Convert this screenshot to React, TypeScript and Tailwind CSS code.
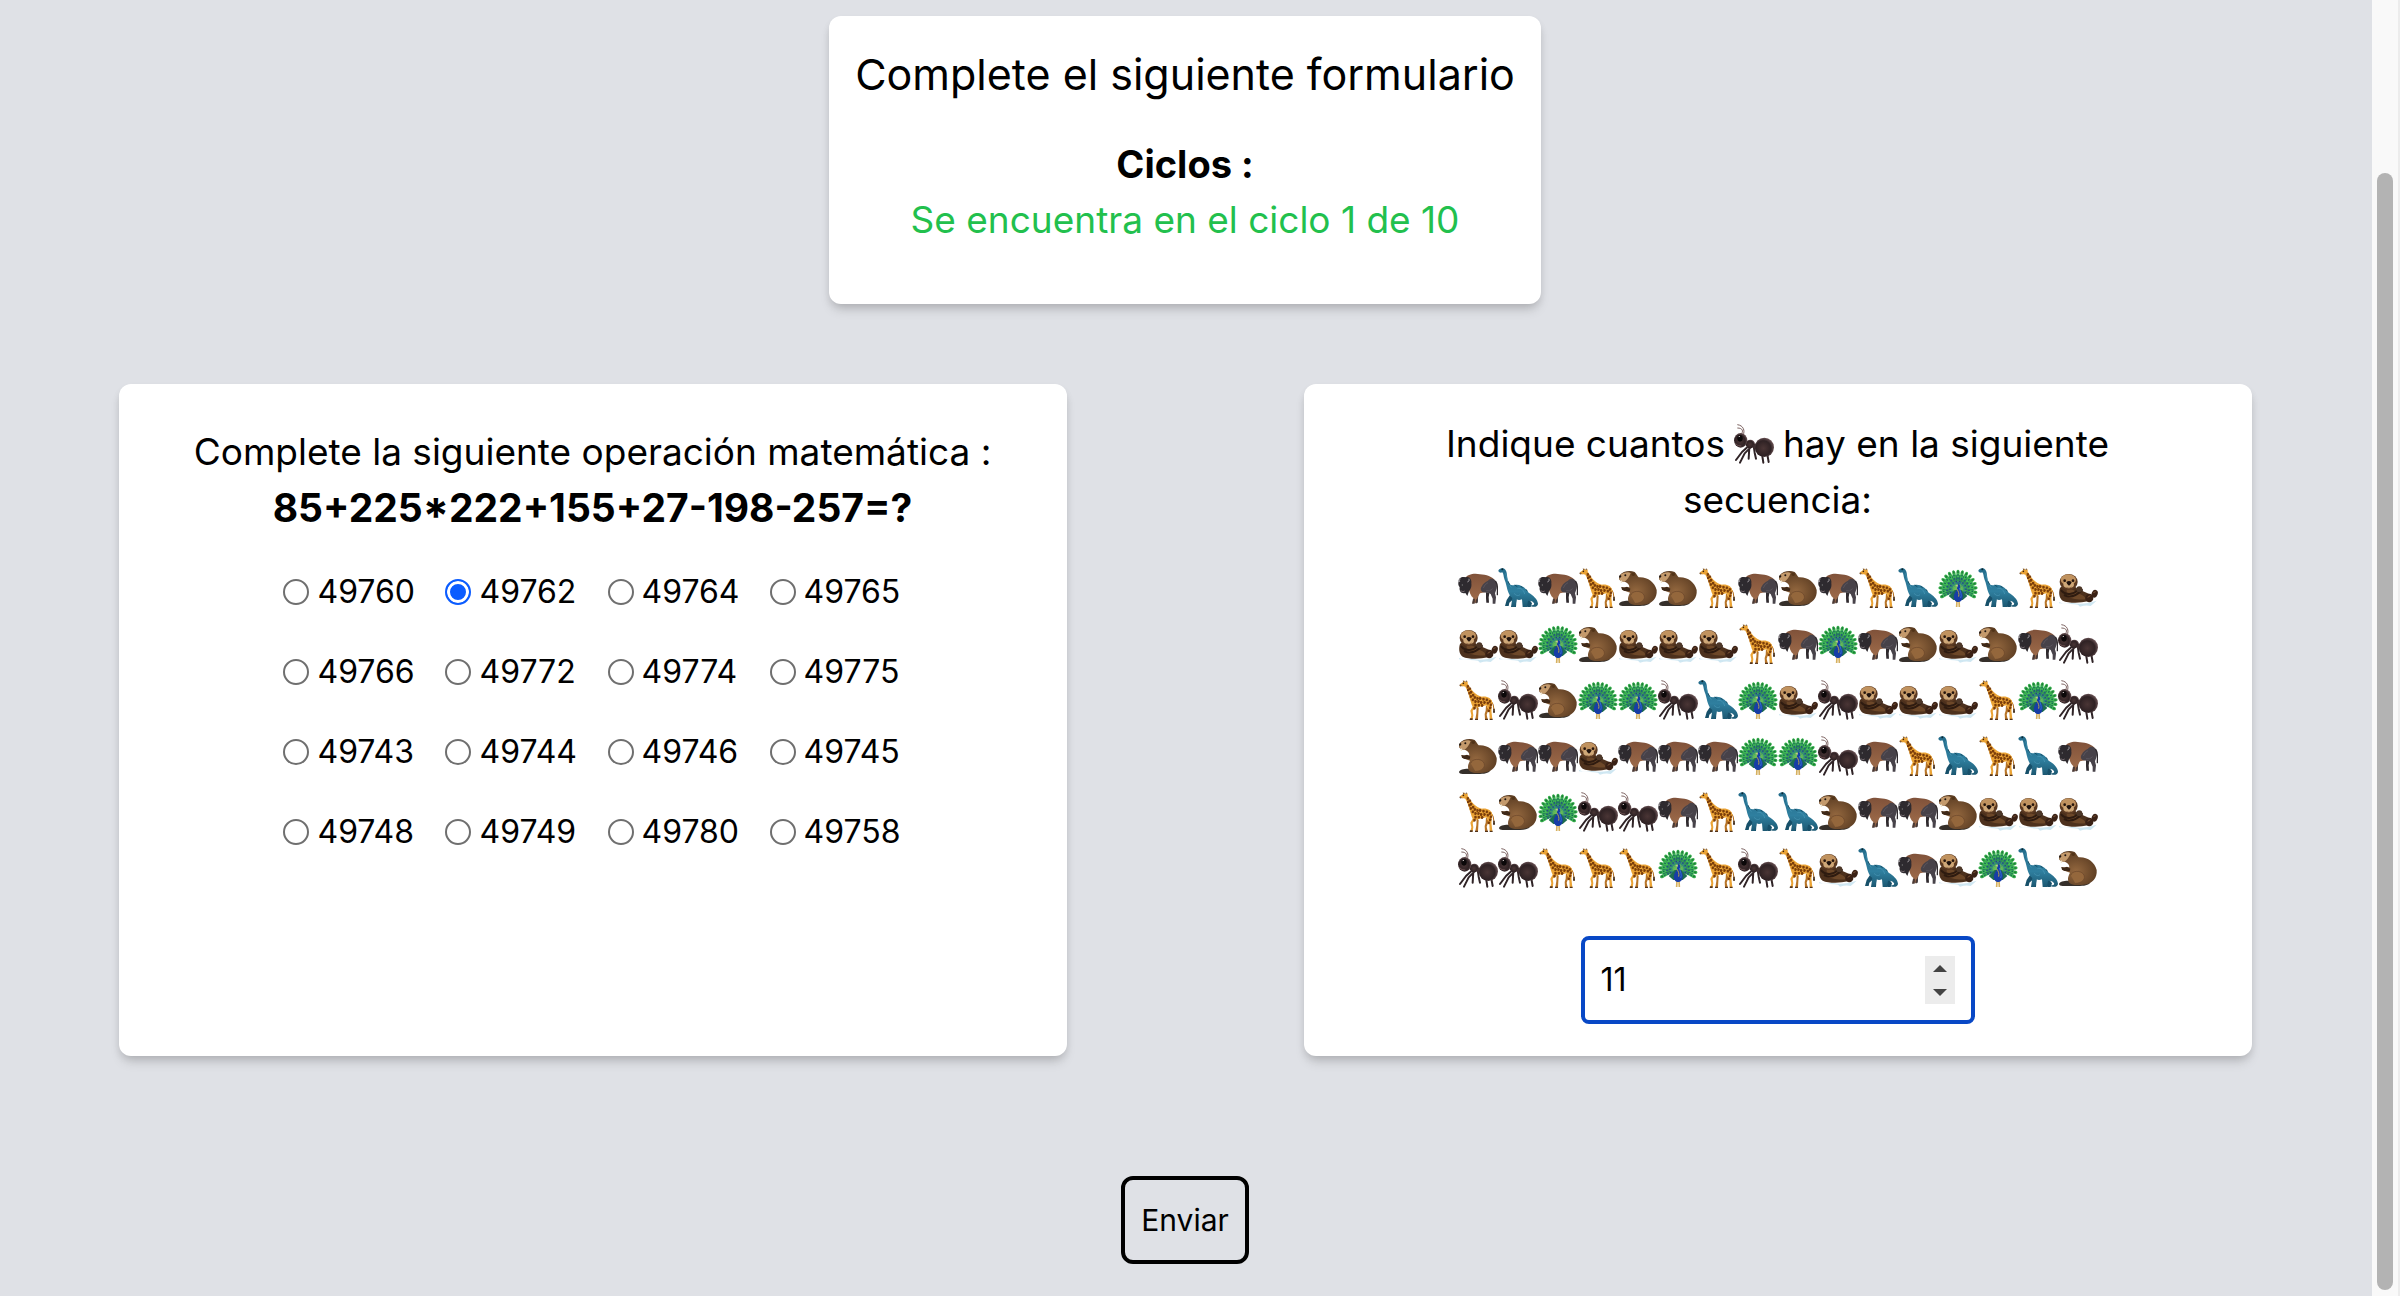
import { useState } from "react";
import type { ReactNode } from "react";

type Animal = "B" | "D" | "G" | "C" | "P" | "O" | "A";

const names: Record<Animal, string> = {
  B: "bisonte",
  D: "dinosaurio",
  G: "jirafa",
  C: "castor",
  P: "pavo real",
  O: "nutria",
  A: "hormiga",
};

const sequence = [
  "BDBGCCGBCBGDPDGO",
  "OOPCOOOGBPBCOCBA",
  "GACPPADPOAOOOGPA",
  "CBBOBBBPPABGDGDB",
  "GCPAABGDDCBBCOOO",
  "AAGGGPGAGODBOPDC",
];

const answers = [
  49760, 49762, 49764, 49765, 49766, 49772, 49774, 49775, 49743, 49744, 49746, 49745, 49748, 49749,
  49780, 49758,
];

function Gradients() {
  return (
    <svg className="absolute size-0" aria-hidden="true">
      <defs>
        <radialGradient id="antBody" cx="45%" cy="55%" r="60%">
          <stop offset="0" stopColor="#4a3535" />
          <stop offset="0.65" stopColor="#2f2224" />
          <stop offset="1" stopColor="#7a6062" />
        </radialGradient>
        <radialGradient id="fur" cx="45%" cy="60%" r="60%">
          <stop offset="0" stopColor="#94683f" />
          <stop offset="1" stopColor="#5b3c22" />
        </radialGradient>
        <linearGradient id="dino" x1="0" y1="0" x2="0" y2="1">
          <stop offset="0" stopColor="#236b8a" />
          <stop offset="0.6" stopColor="#2f7f9f" />
          <stop offset="1" stopColor="#1c5872" />
        </linearGradient>
        <linearGradient id="hump" x1="0" y1="0" x2="0" y2="1">
          <stop offset="0" stopColor="#80523a" />
          <stop offset="1" stopColor="#a06d4b" />
        </linearGradient>
      </defs>
    </svg>
  );
}

const bison = (
  <>
    <path d="M84 72L94 76L92 88L93 104H85L84 90ZM52 78L61 80L59 104H53Z" fill="#2f2a2e" />
    <path d="M20 32C28 19 48 15 66 19C84 20 104 26 112 38C112 50 104 62 96 70L66 76C62 82 60 86 58 92L56 104H44L46 90C38 84 34 72 32 60Z" fill="url(#hump)" />
    <path d="M90 38C100 26 112 34 116 46C119 58 114 68 111 76L114 88L112 107H104L104 92L98 78C90 73 84 75 76 73C68 70 66 62 72 54C76 46 82 42 90 38Z" fill="#474249" />
    <path d="M45 92H51L50 107H42ZM54 94H59L57 106H52Z" fill="#4a3a36" />
    <path d="M113 40C121 52 118 66 118 80" stroke="#2e292d" strokeWidth="4" fill="none" strokeLinecap="round" />
    <path d="M2 40C1 30 12 25 22 28C34 23 42 34 40 46C42 58 36 66 33 70L28 84L22 75C10 78 3 70 5 58C0 52 0 46 2 40Z" fill="#2e2a2f" />
    <path d="M5 42Q2 36 7 32M28 42Q36 40 33 32" stroke="#9b9599" strokeWidth="3" fill="none" />
    <circle cx="13" cy="51" r="2" fill="#777" />
    <path d="M8 68Q15 74 20 69" stroke="#756b70" strokeWidth="3" fill="none" />
    <path d="M76 60Q80 48 90 44M84 68Q95 72 104 62" stroke="#625c65" strokeWidth="2" fill="none" />
  </>
);

const dinosaur = (
  <>
    <path d="M56 88L54 117H44L46 94L34 104L32 114H21L26 96L38 78ZM90 90L102 106L98 117H88L82 100Z" fill="#17506a" />
    <path d="M1 8C3 0 16 -2 22 5C28 12 26 24 30 38C33 50 40 54 50 51C66 48 82 58 92 74C106 82 119 94 120 107C120 117 106 120 94 112C104 114 112 110 107 104C102 98 95 98 90 98L87 117H74L72 94Q62 98 56 94L52 117H39L43 90C26 76 28 54 20 36C16 26 17 16 13 13C8 15 3 14 1 8Z" fill="url(#dino)" />
    <circle cx="13" cy="4" r="3" fill="#0c2731" />
    <path d="M23 16C27 34 31 48 40 59M58 62C70 58 78 68 80 78M48 76C56 84 60 84 66 80" stroke="#4b9ab8" strokeWidth="2" fill="none" />
    <path d="M30 40L35 50M50 51L58 56M68 54L74 60M84 64L88 70" stroke="#164e66" strokeWidth="3" />
  </>
);

const giraffeSpots = [
  [29, 19], [35, 26], [30, 29], [39, 36], [34, 39], [45, 45], [38, 49], [50, 52], [44, 59], [58, 55],
  [52, 64], [66, 55], [61, 64], [69, 67], [76, 57], [79, 67], [86, 59], [89, 69], [95, 64], [98, 74],
  [52, 75], [62, 75], [72, 76], [96, 83], [49, 84], [92, 92],
];

const giraffe = (
  <>
    <path d="M98 60Q108 72 108 90" stroke="#b06a18" strokeWidth="3" fill="none" />
    <path d="M106 86h4l1 12h-6z" fill="#3b2412" />
    <path d="M56 78L62 84L60 118H52L55 100ZM84 74L92 88L86 104L89 118H81L80 102L83 92Z" fill="#b87527" />
    <path d="M6 13L16 6L18 1L22 6L29 4L29 11C34 18 38 27 47 36C54 43 62 48 72 50C88 48 101 55 103 68C102 80 99 88 101 100L103 117H95L94 98L86 76L64 80L53 84L44 92L46 106L44 118H37L40 106L37 92L44 80C36 62 32 36 22 20C16 20 8 20 6 13Z" fill="#eba436" />
    {giraffeSpots.map(([x, y]) => (
      <path key={`${x}-${y}`} d={`M${x - 3} ${y - 3}l5 -1l3 4l-3 5l-5 -1z`} fill="#7b3e0b" />
    ))}
    <path d="M36 115h8v5h-9zM51 116h9v4h-9zM81 116h9v4h-9zM95 116h9v4h-9z" fill="#53331a" />
    <circle cx="16" cy="10" r="2.5" fill="#2c1708" />
    <path d="M16 2l2 4M25 2l-1 4" stroke="#53331a" strokeWidth="3" />
    <path d="M5 14l5 5" stroke="#7a5330" strokeWidth="4" />
  </>
);

const beaver = (
  <>
    <path d="M3 108C6 98 26 97 44 99L98 100C96 110 84 114 66 114H14C8 114 3 112 3 108Z" fill="#352f2a" />
    <path d="M5 22C14 10 34 6 50 12C56 18 58 24 62 28C88 26 110 42 116 66C118 90 104 108 76 110C58 112 40 112 34 104C26 94 32 82 36 74L14 66L10 58L34 58C34 50 30 46 22 42C12 40 4 38 3 32Z" fill="url(#fur)" />
    <path d="M6 22C14 14 32 10 38 16C34 26 28 36 20 41C12 40 5 38 4 32Z" fill="#c49a6c" />
    <path d="M38 82C42 68 66 66 76 78C86 92 72 106 52 106" fill="#94673c" stroke="#68462a" strokeWidth="2" />
    <path d="M3 24l6-3 1 5-5 5z" fill="#1c1411" />
    <circle cx="22" cy="22" r="3" fill="#1c1411" />
    <ellipse cx="46" cy="19" rx="5" ry="5" fill="#513419" />
    <path d="M8 37l4 1v7l-4-1z" fill="#f2e6cc" />
    <path d="M10 57l8 2 9-3 10 6-2 8-15-1-8-4z" fill="#3f2918" />
  </>
);

const otter = (
  <>
    <path d="M3 102Q20 110 44 104Q72 112 116 98L98 114Q84 110 66 116L60 110Q40 108 3 106Z" fill="#cfe7f2" />
    <path d="M6 60C14 50 44 48 58 62L94 78L90 100C66 106 30 106 14 98C2 90 2 72 6 60Z" fill="#4d311d" />
    <path d="M26 64C36 60 52 68 60 76C76 82 84 88 82 94C60 96 36 92 26 84Z" fill="#6d4829" />
    <ellipse cx="32" cy="42" rx="27" ry="24" fill="#5c3a22" />
    <ellipse cx="31" cy="35" rx="23" ry="16" fill="#c0925f" />
    <ellipse cx="32" cy="50" rx="16" ry="11" fill="#cfa878" />
    <circle cx="20" cy="38" r="4" fill="#25150d" />
    <circle cx="45" cy="38" r="4" fill="#25150d" />
    <path d="M25 42Q33 36 41 42Q39 51 33 53Q27 51 25 42Z" fill="#21130e" />
    <path d="M25 58Q33 64 41 57" stroke="#7b5437" strokeWidth="2" fill="none" />
    <path d="M10 68C24 84 46 80 62 64M20 82C40 92 56 82 72 66" stroke="#2e1b10" strokeWidth="6" fill="none" strokeLinecap="round" />
    <circle cx="64" cy="64" r="9" fill="#4d3728" />
    <ellipse cx="94" cy="90" rx="12" ry="13" fill="#3a2115" />
    <ellipse cx="110" cy="77" rx="9" ry="12" transform="rotate(20 110 77)" fill="#3a2115" />
    <path d="M89 88l8-5M106 74l7-3" stroke="#7b5437" strokeWidth="3" />
  </>
);

const plumes = [
  { r: 50, n: 17, long: 9, wide: 5, fill: "#36b04c", eye: "#1d7a3a" },
  { r: 41, n: 15, long: 8, wide: 4.5, fill: "#44bd58", eye: "#176a55" },
  { r: 31, n: 13, long: 7, wide: 4, fill: "#2d9455", eye: "#234c8c" },
  { r: 22, n: 10, long: 6, wide: 4, fill: "#2c8a7c", eye: "#263a7c" },
];

const peacock = (
  <>
    <path d="M60 66L16 84C10 70 12 48 20 38C30 24 44 20 60 20C76 20 90 26 100 38C108 50 110 70 104 84Z" fill="#1f6f58" />
    {plumes.map(({ r, n, long, wide, fill, eye }) =>
      Array.from({ length: n }, (_, i) => {
        const degrees = -114 + (228 * i) / (n - 1);
        return (
          <g key={`${r}-${i}`} transform={`rotate(${degrees} 60 64)`}>
            <path d={`M60 60V${64 - r}`} stroke="#6cc45a" strokeWidth="1.5" />
            <ellipse cx="60" cy={64 - r} rx={wide} ry={long} fill={fill} />
            <ellipse cx="60" cy={62 - r} rx={wide * 0.5} ry={long * 0.4} fill={eye} />
          </g>
        );
      })
    )}
    <path d="M32 84L50 66H70L88 84L74 96H46Z" fill="#1d6d50" />
    <path d="M57 98L56 117M63 98L64 117" stroke="#d6b161" strokeWidth="5" />
    <path d="M60 48C67 47 68 56 66 64C74 74 78 88 70 98C64 104 54 104 50 96C44 86 50 74 56 66Z" fill="#173da6" />
    <path d="M56 62C62 72 64 76 62 86" stroke="#b5a24a" strokeWidth="3" fill="none" />
    <path d="M64 60C68 74 72 80 68 90" stroke="#3f86e4" strokeWidth="2" fill="none" />
    <path d="M52 53l7-3v6z" fill="#d8c79a" />
    <path d="M60 48l-3-6M62 48v-7M64 48l4-5" stroke="#173da6" strokeWidth="1.5" />
  </>
);

const ant = (
  <>
    <path d="M20 32C30 22 26 12 10 12M27 34C34 20 28 4 10 2" stroke="#7c6260" strokeWidth="3" fill="none" />
    <path d="M44 66L24 84L6 108M50 70L32 88L18 116M46 70L44 104M60 72L62 86L66 104M70 74L84 90L88 116M76 70L100 92L104 114" stroke="#302427" strokeWidth="6" fill="none" strokeLinejoin="round" strokeLinecap="round" />
    <ellipse cx="49" cy="60" rx="14" ry="13" fill="url(#antBody)" />
    <ellipse cx="66" cy="67" rx="10" ry="8" fill="#3b2b2d" />
    <ellipse cx="91" cy="70" rx="29" ry="29" fill="url(#antBody)" />
    <ellipse cx="20" cy="49" rx="20" ry="22" fill="url(#antBody)" />
    <ellipse cx="18" cy="43" rx="8" ry="10" fill="#0b0809" />
    <path d="M14 38l4-1" stroke="#c9bcbc" strokeWidth="3" />
    <path d="M4 58q7 10 18 8" stroke="#6e5151" strokeWidth="3" fill="none" />
  </>
);

const drawings: Record<Animal, ReactNode> = {
  B: bison,
  D: dinosaur,
  G: giraffe,
  C: beaver,
  P: peacock,
  O: otter,
  A: ant,
};

function AnimalIcon({ kind }: { kind: Animal }) {
  return (
    <svg viewBox="0 0 120 120" className="inline-block size-10 shrink-0 align-middle" role="img" aria-label={names[kind]}>
      {drawings[kind]}
    </svg>
  );
}

const card = "rounded-xl bg-white shadow-[0_8px_12px_-2px_rgba(0,0,0,0.12),0_4px_8px_-2px_rgba(0,0,0,0.14)]";

export default function App() {
  const [answer, setAnswer] = useState(49762);
  const [count, setCount] = useState(11);

  return (
    <div className="flex min-h-screen bg-[#dfe1e6] font-['Inter','Liberation_Sans',sans-serif] text-black">
      <Gradients />
      <main className="flex grow flex-col items-center pt-4 pb-8">
        <header className={`${card} flex flex-col items-center px-[26px] pt-6 pb-14 text-center`}>
          <h1 className="text-[43px] leading-[68px]">Complete el siguiente formulario</h1>
          <h2 className="mt-7 text-[38px] leading-14 font-bold">Ciclos :</h2>
          <p className="text-[37px] leading-14 text-[#22c04d]">Se encuentra en el ciclo 1 de 10</p>
        </header>

        <div className="mt-20 flex w-full justify-around">
          <section className={`${card} flex min-h-[672px] w-2/5 flex-col items-center px-8 pt-10`}>
            <h2 className="text-center text-[37px] leading-14">
              Complete la siguiente operación matemática :
              <strong className="block text-[39px] leading-14 font-bold">85+225*222+155+27-198-257=?</strong>
            </h2>
            <fieldset className="mt-8 grid grid-cols-4 gap-x-[30px] gap-y-8" aria-label="Resultado">
              {answers.map((value) => (
                <label key={value} className="flex h-12 items-center gap-2 text-[32px]">
                  <input
                    type="radio"
                    name="resultado"
                    value={value}
                    checked={answer === value}
                    onChange={() => setAnswer(value)}
                    className="size-[26px] appearance-none rounded-full border-2 border-[#6f6f6f] bg-white checked:border-[#0b5cff] checked:bg-[#0b5cff] checked:shadow-[inset_0_0_0_3px_white]"
                  />
                  {value}
                </label>
              ))}
            </fieldset>
          </section>

          <section className={`${card} flex w-2/5 flex-col items-center px-8 pt-8 pb-8`}>
            <label htmlFor="cantidad" className="flex flex-col items-center text-[37px] leading-14">
              <span className="flex items-center gap-[9px]">
                <span>Indique cuantos</span>
                <AnimalIcon kind="A" />
                <span>hay en la siguiente</span>
              </span>
              <span>secuencia:</span>
            </label>
            <div className="mt-10 flex flex-col gap-4">
              {sequence.map((row) => (
                <div key={row} className="flex">
                  {[...row].map((kind, i) => (
                    <AnimalIcon key={i} kind={kind as Animal} />
                  ))}
                </div>
              ))}
            </div>
            <div className="mt-12 flex h-[88px] items-center rounded-lg border-4 border-[#0848c6] bg-white px-4">
              <input
                id="cantidad"
                type="number"
                value={count}
                onChange={(e) => setCount(Number(e.target.value))}
                className="w-[324px] appearance-none text-[32px] outline-none [-moz-appearance:textfield] [&::-webkit-inner-spin-button]:appearance-none"
              />
              <div className="flex h-12 w-[30px] flex-col bg-[#ececec]">
                <button type="button" aria-label="Aumentar" onClick={() => setCount(count + 1)} className="flex flex-1 items-center justify-center">
                  <svg viewBox="0 0 14 7" className="h-[7px] w-3.5" fill="#434343"><path d="M7 0L14 7H0Z" /></svg>
                </button>
                <button type="button" aria-label="Disminuir" onClick={() => setCount(count - 1)} className="flex flex-1 items-center justify-center">
                  <svg viewBox="0 0 14 7" className="h-[7px] w-3.5" fill="#434343"><path d="M7 7L0 0H14Z" /></svg>
                </button>
              </div>
            </div>
          </section>
        </div>

        <button type="button" className="mt-30 flex h-[88px] items-center rounded-xl border-4 border-black px-4 text-[30px]">
          Enviar
        </button>
      </main>

      <div className="flex w-[30px] shrink-0 flex-col items-center border-r-2 border-l-2 border-r-[#ececec] border-l-[#dfe1e6] bg-[#f9f9f9] pt-[173px] pb-1.5" aria-hidden="true">
        <div className="w-4 grow rounded-full bg-[#b3b3b3]" />
      </div>
    </div>
  );
}
